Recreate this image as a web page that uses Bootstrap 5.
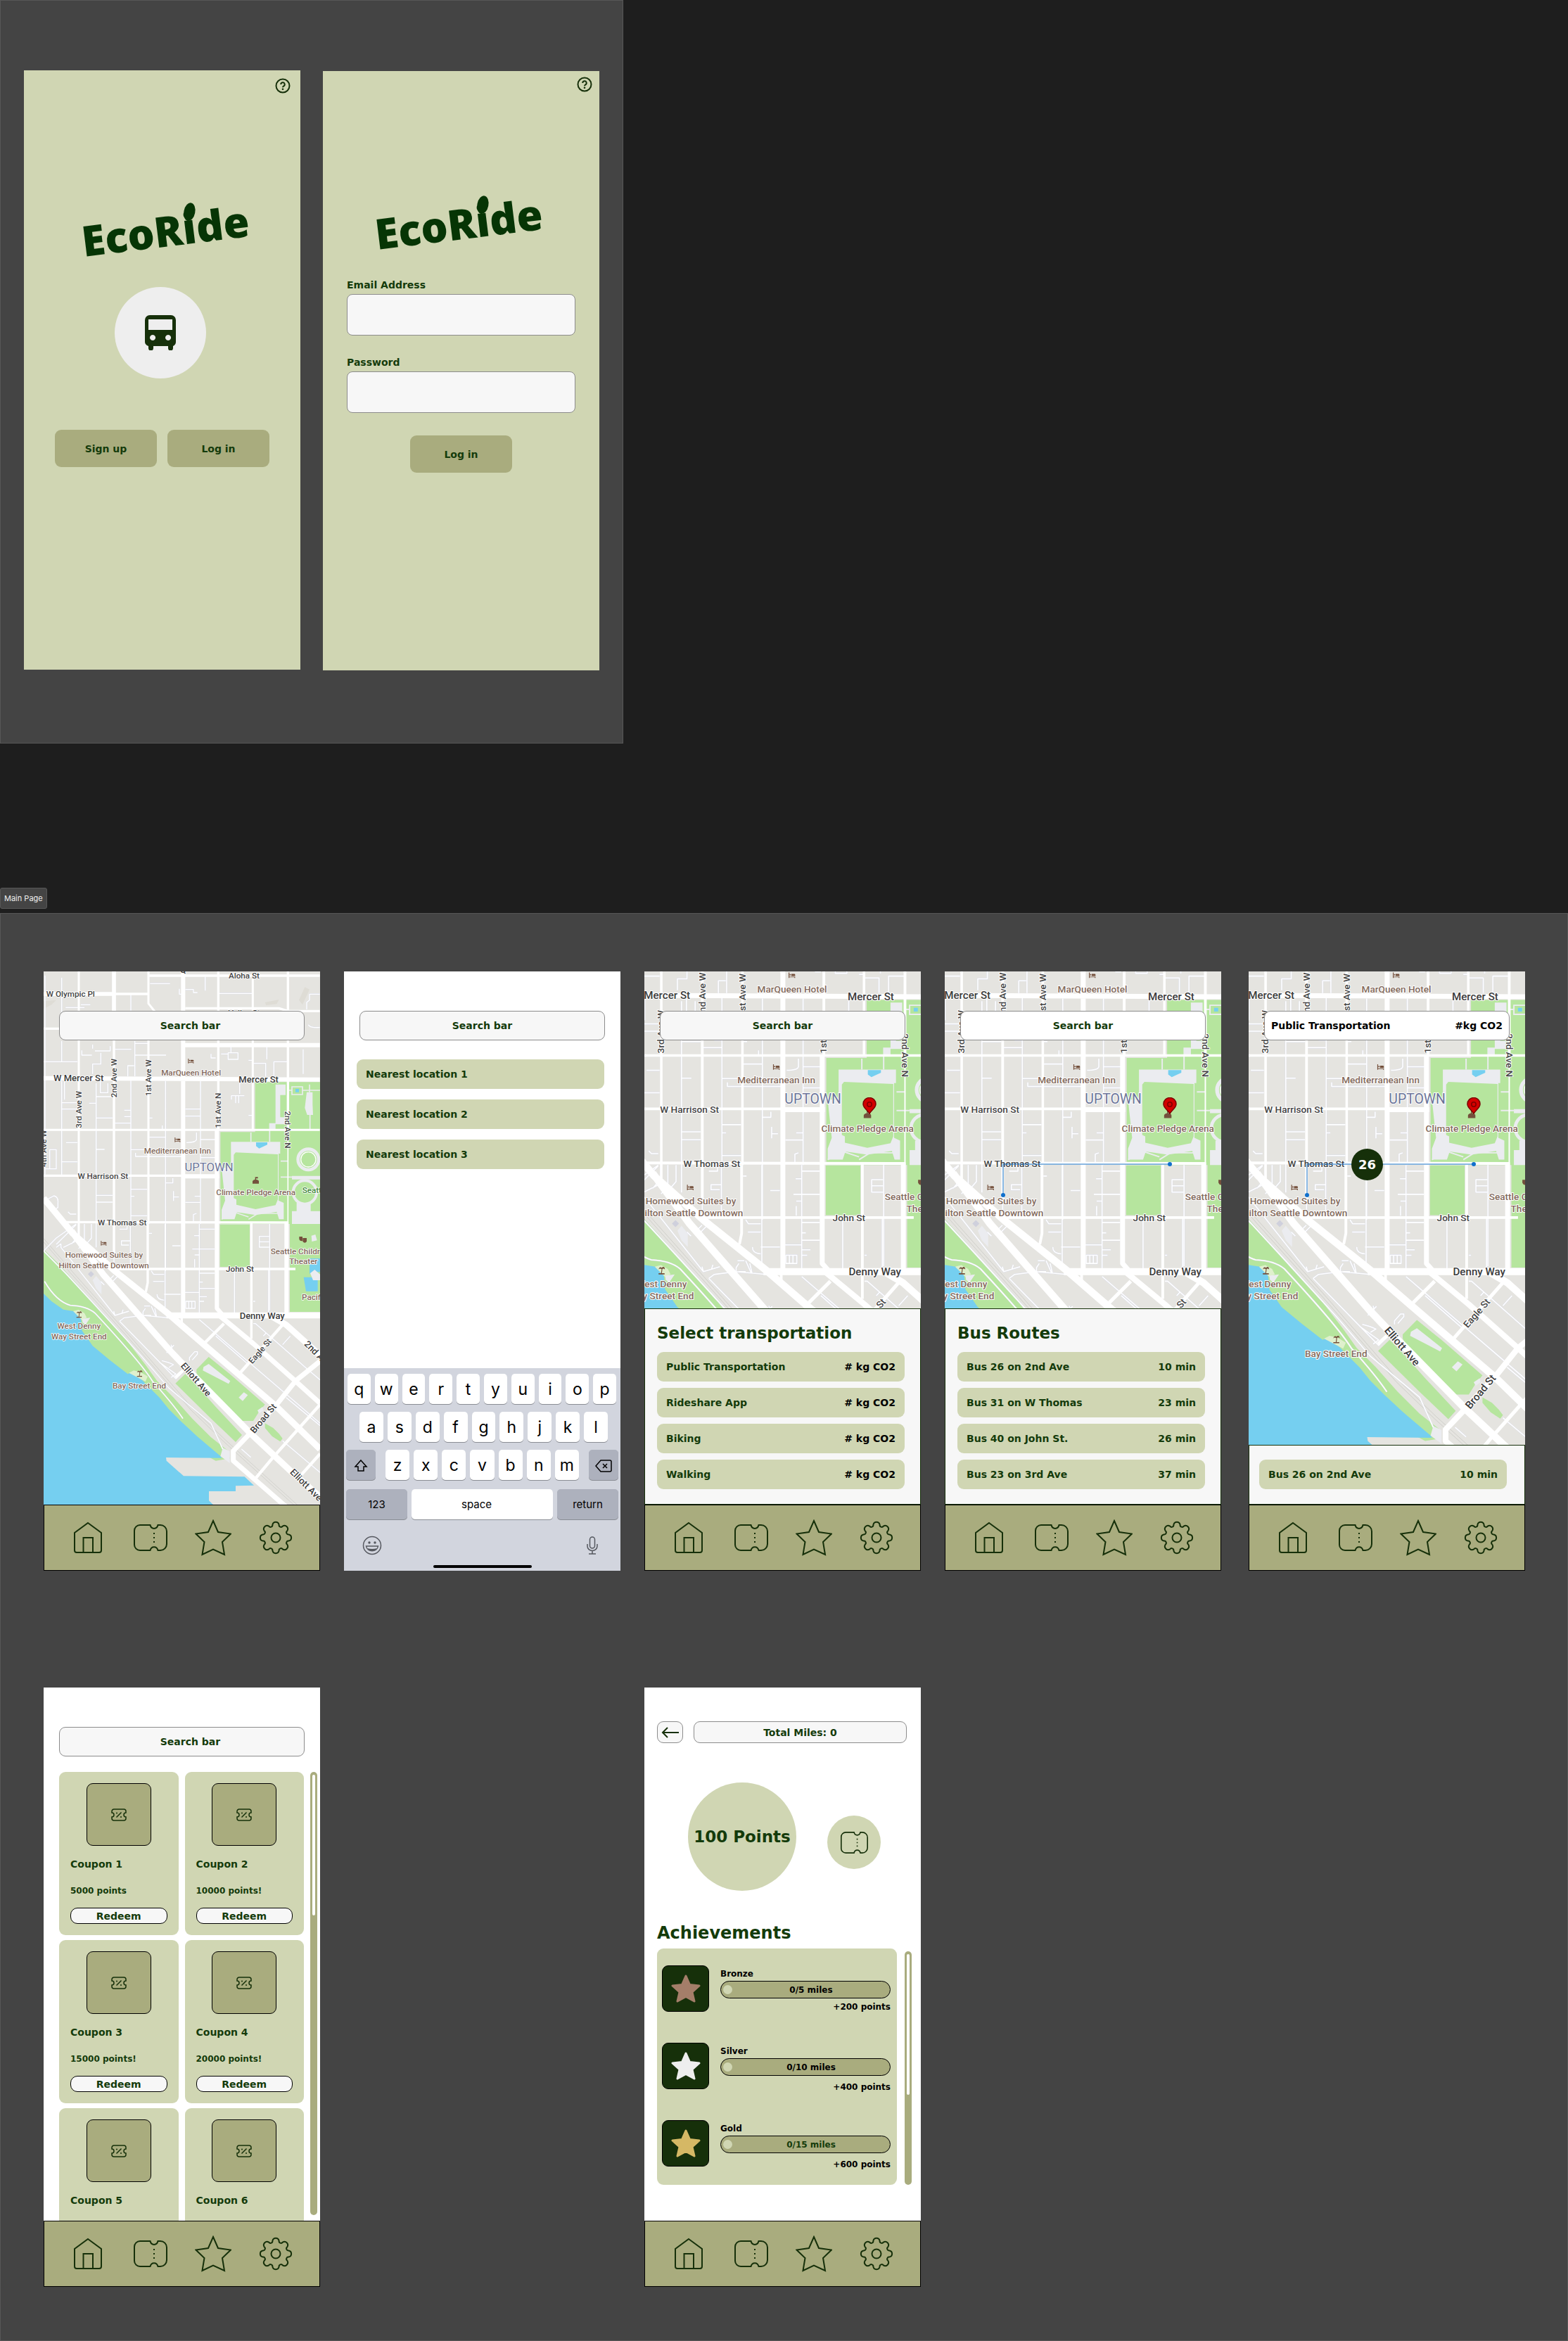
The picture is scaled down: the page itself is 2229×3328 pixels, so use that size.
<!DOCTYPE html>
<html lang="en">
<head>
<meta charset="utf-8">
<meta name="viewport" content="width=device-width, initial-scale=1">
<title>EcoRide</title>
<link href="https://cdn.jsdelivr.net/npm/bootstrap@5.3.0/dist/css/bootstrap.min.css" rel="stylesheet">
<style>
:root{--ink:#143b0b;--deep:#16300a;--olive:#a9ac7e;--sage:#d0d6b3;--paper:#f7f7f7;--board:#444}
body{background:#1e1e1e;font-family:"DejaVu Sans",sans-serif;font-weight:700;font-size:14px;line-height:20px;color:var(--ink)}
.board{background:var(--board);border:1px solid #575757}
.board-auth{width:fit-content;padding:99px 33px 103px;gap:32px;margin-bottom:205px}
.board-tab{display:inline-block;background:var(--board);border:1px solid #575757;border-radius:3px;color:#eee;font:400 11px/28px Inter,sans-serif;padding:0 5px;margin-bottom:6px}
.board-main{display:grid;grid-template-columns:repeat(5,393px);column-gap:34px;row-gap:166px;padding:82px 24px 76px 61px}
.screen{width:393px;height:852px;overflow:hidden;position:relative;display:flex;flex-direction:column;background:#fff}
.screen-auth{background:var(--sage)}
.third-col{grid-column:3}
.shifted{margin-left:5px}
.logo{display:block;width:260px;height:90px;overflow:visible}
.logo text{font:800 60px "Open Sans","Noto Sans",sans-serif;fill:#063505}
.help{position:absolute;right:14px;top:11px;line-height:0}
.help-tight{right:10px;top:8px}
.btn-eco,.btn-row,.btn-redeem{font:inherit;color:var(--ink);border:0}
.btn-eco{background:var(--olive);width:145px;height:53px;border-radius:9px}
.btn-row{background:var(--sage);height:42px;border-radius:9px;padding:0 13px;display:flex;justify-content:space-between;align-items:center;width:352px}
.busdisc{width:130px;height:130px;background:#eee;margin:29px 0 0 129px}
.field{height:59px;border:1px solid #8c8c8c;border-radius:8px;background:var(--paper)}
.field-label{margin-bottom:3px}
.searchbox{position:absolute;top:56px;left:22px;width:349px;height:42px;border:1px solid #8c8c8c;border-radius:9px;background:var(--paper);font:inherit;color:var(--ink);text-align:center;padding:0}
.searchbox::placeholder{color:var(--ink);opacity:1}
.searchbox.nudge{padding-left:24px}
.searchbox.plain{background:#fff}
.citymap{display:block;width:100%;flex:1 1 0;min-height:0}
.overlay{position:absolute;left:0;top:0}
.bus-pin{position:absolute;left:146px;top:252px;width:45px;height:45px;background:var(--deep);color:#fff;font-size:18px}
.sheet{background:var(--paper);border:1px solid var(--deep);padding:0 21px 21px 17px}
.sheet-title{font-size:23px;line-height:28px;font-weight:700;margin:20px 0 13px}
.tabbar{height:94px;flex:none;background:var(--olive);border:1px solid #000;display:grid;grid-template-columns:repeat(4,1fr);align-items:center;justify-items:center;padding:0 18px}
.tabbar a{line-height:0}
.line{fill:none;stroke:var(--deep);stroke-width:2}
.keys{background:#d2d5de;height:288px;padding:8px 0 4px;font-family:Inter,sans-serif;font-weight:400;color:#000}
.keyrow{display:flex;gap:6px;height:43px;margin-bottom:11px}
.key{flex:1 1 0;border:0;border-radius:5px;background:#fff;box-shadow:0 1px 0 #8a8d94;font:400 23px/40px Inter,sans-serif;color:#000;padding:0}
.key-mod{background:#adb1bd;flex:0 0 42px}
.key-word{font-size:15px}
.key-space{padding-right:16px}
.key-wide{flex:0 0 87px}
.homebar{width:140px;height:4px;border-radius:2px;background:#000}
.coupons{display:grid;grid-template-columns:1fr 1fr;gap:7px 9px;width:349px}
.coupon{height:232px;background:var(--sage);border-radius:9px;padding:16px 16px 0}
.coupon-thumb{width:92px;height:89px;border:1px solid #000;border-radius:9px;background:var(--olive);margin:0 auto 16px}
.fine{font-size:12px;line-height:16px}
.btn-redeem{height:23px;border:1px solid #000;border-radius:10px;background:var(--paper);line-height:20px;padding:0;width:100%}
.track{width:10px;border-radius:5px;background:var(--olive);padding:4px 3px}
.track-thumb{height:200px;border-radius:2px;background:#fff}
.pillbox{height:31px;border:1px solid #8c8c8c;border-radius:9px;background:var(--paper)}
.points{width:154px;height:154px;background:var(--sage);font-size:23px;white-space:nowrap}
.miniticket{width:76px;height:76px;background:var(--sage)}
.awards{width:341px;height:336px;background:var(--sage);border-radius:9px;padding:24px 9px 0 7px;color:#000}
.award{height:110px}
.medal{width:67px;height:66px;border-radius:9px;background:var(--deep);border:1px solid #000}
.meter{height:25px;border:1px solid #000;border-radius:13px;background:var(--olive);padding-left:3px;margin:2px 0 4px}
.meter-dot{width:13px;height:13px;border-radius:50%;background:var(--sage)}
.road-l{font:500 35px Roboto,sans-serif;fill:#444}
.road-b{font:500 39px Roboto,sans-serif;fill:#3c3c3c}
.poi{font:500 35px Roboto,sans-serif;fill:#836a5c}
.lbl text{paint-order:stroke;stroke:#fff;stroke-width:5;stroke-linejoin:round}
</style>
<script src="https://cdn.jsdelivr.net/npm/bootstrap@5.3.0/dist/js/bootstrap.bundle.min.js"></script>
</head>
<body>

<svg width="0" height="0" class="position-absolute" aria-hidden="true">
<defs>
<symbol id="i-home" viewBox="0 0 42 46"><path class="line" d="M21 2 40 16V41a3 3 0 0 1-3 3H5a3 3 0 0 1-3-3V16ZM14.500 44V23H28V44"/></symbol>
<symbol id="i-ticket" viewBox="0 0 48 38"><path class="line" d="M9 1H23.500C25 7.500 33 7.500 34.500 1H38a9 9 0 0 1 9 9V28a9 9 0 0 1-9 9H34.500C33 30.500 25 30.500 23.500 37H9a8 8 0 0 1-8-8V9a8 8 0 0 1 8-8Z"/><path class="line" stroke-dasharray="2 4" d="M29 12V28"/></symbol>
<symbol id="i-star" viewBox="0 0 52 52"><path class="line" d="M26 2 33 18 51 20.500 39 32 42 50 26 42.500 10.500 50 13.500 32 1.500 20.500 19 18Z"/></symbol>
<symbol id="i-gear" viewBox="-24 -24 48 48"><path class="line" d="M18.400-4.600A4.700 4.700 0 0 1 18.400 4.600A2.900 2.900 0 0 0 16.300 9.800A4.700 4.700 0 0 1 9.800 16.300A2.900 2.900 0 0 0 4.600 18.400A4.700 4.700 0 0 1-4.600 18.400A2.900 2.900 0 0 0-9.800 16.300A4.700 4.700 0 0 1-16.300 9.800A2.900 2.900 0 0 0-18.400 4.600A4.700 4.700 0 0 1-18.400-4.600A2.900 2.900 0 0 0-16.300-9.800A4.700 4.700 0 0 1-9.800-16.300A2.900 2.900 0 0 0-4.600-18.400A4.700 4.700 0 0 1 4.600-18.400A2.900 2.900 0 0 0 9.800-16.300A4.700 4.700 0 0 1 16.300-9.800A2.900 2.900 0 0 0 18.400-4.600Z"/><circle class="line" r="6.500"/></symbol>
<symbol id="i-help" viewBox="0 0 22 22"><circle class="line" cx="11" cy="11" r="9.500"/><path class="line" d="M8.300 9a2.700 2.700 0 1 1 4 2.300c-1 .6-1.300 1-1.300 2"/><circle cx="11" cy="15.800" r="1.300" fill="#16300a"/></symbol>
<symbol id="i-coupon" viewBox="0 0 22 18"><path class="line" style="stroke-width:1.500" d="M4 1H18a3 3 0 0 1 3 3V6a3 3 0 0 0 0 6v2a3 3 0 0 1-3 3H4a3 3 0 0 1-3-3V12a3 3 0 0 0 0-6V4a3 3 0 0 1 3-3ZM7.500 12.500 14.500 5.500"/><circle cx="8" cy="6.500" r="1" fill="#16300a"/><circle cx="14" cy="12" r="1" fill="#16300a"/></symbol>
<symbol id="i-medal" viewBox="0 0 42 40"><path fill="currentColor" stroke="currentColor" stroke-width="3" stroke-linejoin="round" d="M21 2 26.500 14.500 40 16 30 25 33 38 21 31.500 9 38 12 25 2 16 15.500 14.500Z"/></symbol>
<symbol id="i-pin" viewBox="0 0 20 24"><path d="M10 23C7 18 1 15 1 9.500a9 9 0 0 1 18 0C19 15 13 18 10 23Z" fill="#d40000" stroke="#7d0000" stroke-width="1.500"/><circle cx="10" cy="10" r="3.200" fill="none" stroke="#7d0000" stroke-width="1.500"/></symbol>
<g id="i-bed" fill="#74503c"><path d="M0 0H3V15H24V20H21V17H3V20H0ZM10 5H21a3 3 0 0 1 3 3V13H10Z"/><circle cx="6" cy="8" r="2.500"/></g>
<g id="i-palm" fill="#74503c"><path d="M0 24H22V28H0ZM9 24 11 9 14 9 12 24ZM11 9C4 5 1 8 0 12 2-2 10 2 12 5 14-2 24-1 23 10 20 6 16 6 13 9Z"/></g>

<g id="minor">
<path d="M192 440V1290M263 450V600M263 720V810M263 890V1290M410 900V1600M558 520V590M558 880V1500M706 890V1700M855 890V1500M1150 1500V1870M575 720V870M186 808H330M280 577H360M345 565H385M640 475H725M875 445V505M765 497V520H775M790 500H825V513H842M935 517H1075M1320 520H1364M1320 520V545L1308 555V585M1315 650Q1320 664 1364 662M490 755H560M575 780H708M575 730H632M545 870V825H572M900 775V792H920M943 775H975M973 770H1015V798H973ZM985 745V770M1060 802H1075M1080 815H1133V870M1138 745V798M1168 870V808H1230M1293 755V860M265 983H335M265 1010H330M275 890V970M380 985H408M428 890V940H460V900M410 957H480M410 1048H480M485 1070H558M530 1015H558M530 1042H558M637 1048H650M637 1130H706M692 1080V1100M790 1010H853M790 1040H853M855 1140H918M838 1110V1140Q835 1153 795 1153M282 1153H330M412 1182H446M265 1235H330M212 1265V1183H240V1265H190M560 1183H632M578 1197V1212H780M855 1217H920M987 970V953H1042M1005 953V985M1018 953V985M1060 1037H1078M1022 890V945M410 1378H480M410 1407H480M560 1352H628M560 1382H573M706 1325H737V1305M740 1360V1402M740 1385H763M830 1382H853M790 1408H853M560 1465H628M290 1448 300 1458H325M825 1490V1460L838 1455M510 1522H542V1500M192 1400 230 1380Q250 1385 247 1410V1430L230 1440"/>
<path d="M349 760V780H392M395 735V752M470 742V762H405M395 860V818H430V770"/>
</g>
<g id="minor2">
<path d="M214 0V50L185 85M240 0V70Q238 85 215 105M270 0V60L240 95M398 90V72H435M398 75V90H430M436 0V190M366 0V170M515 40H528M584 0V380M730 0V380M708 50H730M700 107H796M730 22H796M615 93H650M710 132H730M710 150V185M880 192V380M1025 192V380M1028 53H986V99H1028M986 76H1028M986 53V99M525 200 535 215H580M533 245H580M580 300H650M550 300Q548 322 580 325M730 210H796M730 275H796M732 248H745M732 310H762M732 330H750M668 292H730M672 330H712V360H672ZM685 330V360M698 330V360M960 330H968M495 350H520M490 395V375L500 360M500 390H525M540 360 548 395M525 350 545 395M730 408 1000 640 1245 850M800 478 940 600M960 425H970L1180 610 1245 665M1118 478 1085 515M1015 465 1003 478M1100 740 1245 860M1085 925 1245 1060M910 960 950 995M688 583V570L710 545H722V555L700 580M560 590 630 640 610 655M570 583Q600 590 620 600L600 612M390 415 410 400 490 390 600 400M390 415 630 660 660 630M120 100 140 85V100L370 390 430 372M370 390 365 372M400 380 405 365M120 87 205 3M66 115 120 60 205 0M150 100 210 70M310 245 325 260M360 245 380 225M345 240 365 220M590 550 622 517M615 540 610 515"/>
<path d="M66 115 160 210 280 340 480 560 600 700 780 850 830 960M70 245Q120 330 180 347 250 350 285 380 480 590 530 670 620 770 660 830 820 960M157 225Q155 290 190 312L225 305M195 312 190 345M285 380Q310 400 303 430L290 460M303 430 250 425 240 450 260 490 330 545 400 590 470 600 510 650M240 360 255 400M575 740 605 770M520 650 540 670M700 660 790 830 808 930M785 825 800 828 810 850 828 850 838 870 858 870 870 890 890 895M865 890H887V908H865ZM745 625 800 660 1000 790M780 680 900 790 910 840M740 640 735 660M800 660 860 720 985 815M875 765 910 800 905 840 965 838M910 800 960 815 967 838M790 1005 860 1003M900 1147Q890 1125 920 1125L975 1120M775 1148H1000M1110 195H1143M1140 170V225M1120 257Q1133 257 1133 285V345M1125 322H1182V348H1125ZM880 5V95M838 95V150M815 120H838M815 150H865V72M875 160V130L885 115"/>
</g>
<g id="roads">
<path d="M336 423V1570M633 423V560L665 600M633 700V1500M1078 455V890M1078 745V1100M186 1099H1364" stroke-width="9"/>
<path d="M486 600V1640M186 519H630M633 441H1364M790 580H1190L1228 592H1364M186 667H260M931 423V1100M1228 423V1100M270 1492 1230 1494M186 1294H780M630 1500V1750L622 1790" stroke-width="10"/>
<path d="M486 423V600M186 519H490" stroke-width="17"/>
<path d="M1228 890V1490M935 1099H1078" stroke-width="5"/>
<path d="M781 423V1890M186 878 1364 884M781 737H1364M781 1297H935M925 1100V1860L960 1900M1222 1490V1890" stroke-width="18"/>
<path d="M1072 1494V1990M500 1692H1260M775 1890V1925" stroke-width="10"/>
</g>
<g id="roads2">
<path d="M66-110 190 40 375 205 600 385 750 515 1060 780 1245 960M185 30 320 215 600 535 700 640 950 895 1110 1045 1245 1165" stroke-width="27"/>
<path d="M590 390H1245M1040 395 1100 430 1245 560" stroke-width="26"/>
<path d="M815 390 960 510 1140 670 1245 765M1245 585 1140 670 1060 770 940 900 875 968V1010L1110 1215" stroke-width="21"/>
<path d="M1085 430 898 642M835 425 745 515M1245 770 1045 995 970 1085M1245 980 1165 1070M628 655 660 625" stroke-width="13"/>
</g>
<g id="city">
<path fill="#e5e4e0" d="M186 423H1365V2700H186Z"/>
<path fill="#dedcd5" d="M186 550 240 545 220 565 186 582ZM1130 555 1190 543 1180 562 1135 567ZM1300 490 1320 500 1290 565 1275 545Z"/>
<path fill="#b6e59e" d="M1088 895H1365V1500H940V1108H1088ZM938 1502H1065V1683H938ZM1236 1490H1365V1875H1236ZM1240 1300H1365V1500H1240Z"/>
<g transform="translate(120 1500)">
<path fill="#b6e59e" d="M66 108 130 170 220 270 290 350 400 470 500 600 550 670 620 740 700 830 780 910 850 965 860 1000 800 1010 600 900 300 700 66 330Z"/>
<path fill="#75cff0" d="M66 297 100 330 150 365 195 372 225 400 230 455 275 520 350 582 425 640 450 628 500 680 560 740 600 790 650 840 720 905 820 990 825 998 588 996 590 1010 663 1075 923 1078 963 1115 885 1117V1140H771V1180L792 1200H66Z"/>
<path fill="#dff0cd" d="M192 372 215 366 240 380 250 400 230 410ZM430 635 450 625 480 632 510 650 500 672Z"/>
<path fill="#b6e59e" d="M628 680 670 640 720 690 800 780 912 900 885 930 780 830ZM718 620 770 567 860 640 1010 770 985 800 960 840 910 840 820 760 740 680 718 635ZM1010 850 1045 870 1070 895 1085 915 1075 928 1040 905 1010 870Z"/>
<path fill="#ebecf0" d="M748 610 770 597 862 670 855 682 745 625ZM898 740 920 718 937 730 915 755ZM978 795 1000 780 1003 795 985 808ZM230 405 265 400 245 430 232 420ZM830 955 860 970V1020L820 990ZM275 240 290 222 313 250V300L290 275Z"/>
<path fill="#cfd0dc" d="M255 214 268 201 281 214 268 227Z"/>
<path fill="#75cff0" d="M1200 147H1245V205H1225L1200 212ZM1175 227H1235V287H1185Z"/>
<path fill="#ebecf0" d="M1203 210 1222 195 1245 215V240H1215ZM1208 50 1225 45 1232 70 1210 75Z"/>
<path fill="none" stroke="#c9c8c4" stroke-width="2" d="M66 62 190 205 440 485 700 785 840 920 1150 1200M60 70 184 213 434 493 694 793 834 928 1144 1208"/>
</g>
<path fill="#ebecf0" d="M985 1150H1195V1200H1188V1400L1210 1410V1480H1190L1180 1448 1090 1462 1010 1450 1000 1480H945V1440L960 1400 945 1260H985ZM1175 905H1218V950H1195V1045H1215V1075H1175ZM1148 1070H1175V1100H1148ZM1308 938H1333V990L1335 1035H1310L1300 1005ZM1245 1445H1365V1500H1245ZM1245 1295H1365V1310H1245ZM1265 1410H1325V1450H1265Z"/>
<path fill="#b6e59e" d="M1005 1195 1185 1203V1395L1175 1420 1090 1437 1008 1418V1395L997 1390V1205Z"/>
<path fill="#75cff0" d="M1092 1152H1140V1162L1105 1178 1092 1168ZM1260 924H1275V938H1260Z"/>
<g fill="none" stroke="#ebecf0"><circle cx="1315" cy="1225" r="44" stroke-width="14"/><circle cx="1300" cy="1365" r="50" stroke-width="12"/><path stroke-width="5" d="M1245 915H1290V948H1245ZM1230 930H1245M1290 930H1365M1320 905V938M1322 1035V1095M1197 1232H1228M1197 1300H1245M945 1480 1000 1450 1060 1470M1060 1480 1100 1455 1200 1455M1070 1110V1150M1150 1100V1150"/></g>
<circle cx="1315" cy="1225" r="32" fill="none" stroke="#fff" stroke-width="4"/>
<g fill="none" stroke-linejoin="round">
<g stroke="#d9dcea" stroke-width="6"><use href="#minor"/><g transform="translate(120 1500)"><use href="#minor2"/></g></g>
<g stroke="#fff" stroke-width="4"><use href="#minor"/><g transform="translate(120 1500)"><use href="#minor2"/></g></g>
<g stroke="#fff"><use href="#roads"/><g transform="translate(120 1500)"><use href="#roads2"/></g></g>
</g>
<use href="#i-bed" x="802" y="795"/><use href="#i-bed" x="745" y="1131"/><use href="#i-bed" x="430" y="1572"/>
<use href="#i-palm" x="326" y="1872"/><use href="#i-palm" x="584" y="2124"/>
<path fill="#74503c" d="M1088 1300H1100V1306H1092V1310Q1104 1312 1104 1318V1328H1077V1318Q1078 1312 1088 1310ZM1276 1554H1290V1572Q1280 1575 1276 1565ZM1291 1560H1308V1575Q1300 1585 1291 1575Z"/>
</g>
</defs>
</svg>

<!-- Sign-in screens -->
<section class="board board-auth d-flex">
  <main class="screen screen-auth">
    <a href="#" class="help" aria-label="Help"><svg width="22" height="22"><use href="#i-help"/></svg></a>
    <svg class="logo mx-auto" style="margin-top:189px" role="img" aria-label="EcoRide" viewBox="0 0 260 90"><g transform="translate(18 76) rotate(-7)"><text>EcoRide</text><ellipse transform="translate(157 -45) rotate(18)" rx="8" ry="13" fill="#063505"/></g></svg>
    <div class="busdisc rounded-circle d-flex align-items-center justify-content-center">
      <svg width="44" height="50" viewBox="0 0 44 50"><path fill="#16300a" fill-rule="evenodd" d="M7 0H37a7 7 0 0 1 7 7V38q0 4-4 6V47a3.500 3.500 0 0 1-7 0V44H12V47a3.500 3.500 0 0 1-7 0V44Q0 42 0 38V7A7 7 0 0 1 7 0ZM5 6V21H39V6ZM11 28a4 4 0 1 0 .1 0ZM33 28a4 4 0 1 0 .1 0Z"/></svg>
    </div>
    <div class="d-flex justify-content-center" style="gap:15px;margin-top:73px">
      <button class="btn btn-eco" type="button">Sign up</button>
      <button class="btn btn-eco" type="button">Log in</button>
    </div>
  </main>
  <form class="screen screen-auth" style="margin-top:1px">
    <a href="#" class="help help-tight" aria-label="Help"><svg width="22" height="22"><use href="#i-help"/></svg></a>
    <svg class="logo mx-auto" style="margin-top:178px" role="img" aria-label="EcoRide" viewBox="0 0 260 90"><g transform="translate(10 76) rotate(-7)"><text>EcoRide</text><ellipse transform="translate(157 -45) rotate(18)" rx="8" ry="13" fill="#063505"/></g></svg>
    <div class="d-flex flex-column" style="padding:26px 34px 0">
      <div class="mb-4 pb-1">
        <label class="field-label" for="email">Email Address</label>
        <input class="form-control field" type="email" id="email">
      </div>
      <div class="mb-4 pb-2">
        <label class="field-label" for="pass">Password</label>
        <input class="form-control field" type="password" id="pass">
      </div>
      <button class="btn btn-eco mx-auto" type="button">Log in</button>
    </div>
  </form>
</section>

<div class="board-tab d-block" style="width:fit-content">Main Page</div>

<section class="board board-main">

  <article class="screen">
    <svg class="citymap" viewBox="186 423 1179 2274" preserveAspectRatio="xMinYMin slice">
      <use href="#city"/>
      <g class="lbl" id="labels">
        <g class="road-l" text-anchor="middle">
          <text x="1041" y="454">Aloha St</text><text x="301" y="531">W Olympic Pl</text><text x="1041" y="612">Valley St</text>
          <text x="439" y="1309">W Harrison St</text><text x="521" y="1506">W Thomas St</text><text x="1023" y="1705">John St</text>
          <text transform="translate(497 878) rotate(-90)">2nd Ave W</text>
          <text transform="translate(645 877) rotate(-90)">1st Ave W</text>
          <text transform="translate(347 1012) rotate(-90)">3rd Ave W</text>
          <text transform="translate(198 1178) rotate(-90)">4th Ave W</text>
          <text transform="translate(942 1016) rotate(-90)">1st Ave N</text>
          <text transform="translate(1216 1098) rotate(90)">2nd Ave N</text>
          <text transform="translate(1118 2050) rotate(-49)">Eagle St</text>
        </g>
        <g class="road-b" text-anchor="middle">
          <text x="335" y="892">W Mercer St</text><text x="1103" y="897">Mercer St</text><text x="1118" y="1904">Denny Way</text>
          <text transform="translate(1133 2338) rotate(-50)">Broad St</text>
          <text transform="translate(826 2172) rotate(49)">Elliott Ave</text>
          <text transform="translate(1296 2622) rotate(45)">Elliott Ave</text>
          <text transform="translate(1345 2064) rotate(45)">2nd Ave</text>
          <text x="781" y="428">Q</text>
        </g>
        <g class="poi" text-anchor="middle">
          <text x="815" y="867">MarQueen Hotel</text><text x="757" y="1201">Mediterranean Inn</text><text x="1091" y="1377">Climate Pledge Arena</text>
          <text x="444" y="1644">Homewood Suites by</text><text x="443" y="1688">Hilton Seattle Downtown</text>
          <text x="337" y="1948">West Denny</text><text x="337" y="1991">Way Street End</text><text x="594" y="2201">Bay Street End</text>
          <text x="1294" y="1672">Theater</text>
        </g>
        <g class="poi"><text x="1154" y="1629">Seattle Childr</text><text x="1287" y="1824">Pacific</text><text x="1289" y="1368" style="fill:#448a3c">Seattle</text></g>
        <text x="891" y="1274" text-anchor="middle" style="font:400 50px Roboto,sans-serif;fill:#6b7499">UPTOWN</text>
      </g>
    </svg>
    <input class="searchbox nudge" type="text" placeholder="Search bar" aria-label="Search">
    <nav class="tabbar"><a href="#" aria-label="Home"><svg width="42" height="46"><use href="#i-home"/></svg></a><a href="#" aria-label="Coupons"><svg width="48" height="38"><use href="#i-ticket"/></svg></a><a href="#" aria-label="Achievements"><svg width="52" height="52"><use href="#i-star"/></svg></a><a href="#" aria-label="Settings"><svg width="48" height="48"><use href="#i-gear"/></svg></a></nav>
  </article>

  <article class="screen">
    <input class="searchbox" type="text" placeholder="Search bar" aria-label="Search">
    <div class="d-flex flex-column" style="gap:15px;padding:125px 0 0 18px">
      <button class="btn btn-row" type="button">Nearest location 1</button>
      <button class="btn btn-row" type="button">Nearest location 2</button>
      <button class="btn btn-row" type="button">Nearest location 3</button>
    </div>
    <div class="keys mt-auto d-flex flex-column">
      <div class="keyrow" style="padding:0 6px 0 5px"><button class="key">q</button><button class="key">w</button><button class="key">e</button><button class="key">r</button><button class="key">t</button><button class="key">y</button><button class="key">u</button><button class="key">i</button><button class="key">o</button><button class="key">p</button></div>
      <div class="keyrow" style="padding:0 18px 0 22px"><button class="key">a</button><button class="key">s</button><button class="key">d</button><button class="key">f</button><button class="key">g</button><button class="key">h</button><button class="key">j</button><button class="key">k</button><button class="key">l</button></div>
      <div class="keyrow" style="padding:0 3px">
        <button class="key key-mod me-2" aria-label="Shift"><svg width="20" height="20" viewBox="0 0 20 20"><path d="M10 2 18 11H14V17H6V11H2Z" fill="none" stroke="#000" stroke-width="1.500"/></svg></button>
        <button class="key">z</button><button class="key">x</button><button class="key">c</button><button class="key">v</button><button class="key">b</button><button class="key">n</button><button class="key">m</button>
        <button class="key key-mod ms-2" aria-label="Delete"><svg width="24" height="20" viewBox="0 0 24 20"><path d="M8 2H21a2 2 0 0 1 2 2V16a2 2 0 0 1-2 2H8L1 10ZM11 7 17 13M17 7 11 13" fill="none" stroke="#000" stroke-width="1.500"/></svg></button>
      </div>
      <div class="keyrow" style="padding:2px 3px 0;height:45px"><button class="key key-mod key-word key-wide">123</button><button class="key key-word key-space">space</button><button class="key key-mod key-word key-wide">return</button></div>
      <div class="d-flex justify-content-between" style="padding:12px 31px 0 26px">
        <svg width="28" height="28" viewBox="0 0 28 28"><circle cx="14" cy="14" r="12.500" fill="none" stroke="#55585f" stroke-width="1.500"/><circle cx="10" cy="10" r="1.700" fill="#55585f"/><circle cx="18" cy="10" r="1.700" fill="#55585f"/><path d="M5.500 15H22.500C21 24 7 24 5.500 15Z" fill="none" stroke="#55585f" stroke-width="1.500"/><path d="M7 18Q14 20 21 18 18 22 14 22 10 22 7 18Z" fill="#55585f"/></svg>
        <svg width="18" height="28" viewBox="0 0 18 28"><g fill="none" stroke="#55585f" stroke-width="1.500"><rect x="5.500" y="2" width="7" height="16" rx="3.500"/><path d="M2 12V15a7 6.500 0 0 0 14 0V12M9 22V26M4 26H14"/></g></svg>
      </div>
      <div class="homebar mx-auto mt-auto"></div>
    </div>
  </article>

  <article class="screen">
    <svg class="citymap" data-map viewBox="274 791 1012 1236" preserveAspectRatio="xMinYMin slice"><use href="#city"/></svg>
    <svg class="overlay" width="393" height="480"><use href="#i-pin" x="310" y="179" width="20" height="24"/></svg>
    <input class="searchbox" type="text" placeholder="Search bar" aria-label="Search">
    <div class="sheet">
      <h2 class="sheet-title">Select transportation</h2>
      <div class="d-flex flex-column" style="gap:9px">
        <button class="btn btn-row" type="button">Public Transportation<span class="text-black"># kg CO2</span></button>
        <button class="btn btn-row" type="button">Rideshare App<span class="text-black"># kg CO2</span></button>
        <button class="btn btn-row" type="button">Biking<span class="text-black"># kg CO2</span></button>
        <button class="btn btn-row" type="button">Walking<span class="text-black"># kg CO2</span></button>
      </div>
    </div>
    <nav class="tabbar"><a href="#" aria-label="Home"><svg width="42" height="46"><use href="#i-home"/></svg></a><a href="#" aria-label="Coupons"><svg width="48" height="38"><use href="#i-ticket"/></svg></a><a href="#" aria-label="Achievements"><svg width="52" height="52"><use href="#i-star"/></svg></a><a href="#" aria-label="Settings"><svg width="48" height="48"><use href="#i-gear"/></svg></a></nav>
  </article>

  <article class="screen">
    <svg class="citymap" data-map viewBox="274 791 1012 1236" preserveAspectRatio="xMinYMin slice"><use href="#city"/></svg>
    <svg class="overlay" width="393" height="480"><path d="M83 318V274H320" fill="none" stroke="#1773c8" stroke-width="1"/><circle cx="83" cy="318" r="3" fill="#1170cc"/><circle cx="320" cy="274" r="3" fill="#1170cc"/><use href="#i-pin" x="310" y="179" width="20" height="24"/></svg>
    <input class="searchbox plain" type="text" placeholder="Search bar" aria-label="Search">
    <div class="sheet">
      <h2 class="sheet-title">Bus Routes</h2>
      <div class="d-flex flex-column" style="gap:9px">
        <button class="btn btn-row" type="button">Bus 26 on 2nd Ave<span>10 min</span></button>
        <button class="btn btn-row" type="button">Bus 31 on W Thomas<span>23 min</span></button>
        <button class="btn btn-row" type="button">Bus 40 on John St.<span>26 min</span></button>
        <button class="btn btn-row" type="button">Bus 23 on 3rd Ave<span>37 min</span></button>
      </div>
    </div>
    <nav class="tabbar"><a href="#" aria-label="Home"><svg width="42" height="46"><use href="#i-home"/></svg></a><a href="#" aria-label="Coupons"><svg width="48" height="38"><use href="#i-ticket"/></svg></a><a href="#" aria-label="Achievements"><svg width="52" height="52"><use href="#i-star"/></svg></a><a href="#" aria-label="Settings"><svg width="48" height="48"><use href="#i-gear"/></svg></a></nav>
  </article>

  <article class="screen shifted">
    <svg class="citymap" data-map viewBox="274 791 1012 1735" preserveAspectRatio="xMinYMin slice"><use href="#city"/></svg>
    <svg class="overlay" width="393" height="480"><path d="M83 318V274H320" fill="none" stroke="#1773c8" stroke-width="1"/><circle cx="83" cy="318" r="3" fill="#1170cc"/><circle cx="320" cy="274" r="3" fill="#1170cc"/><use href="#i-pin" x="310" y="179" width="20" height="24"/></svg>
    <div class="searchbox plain text-black d-flex justify-content-between align-items-center" style="padding:0 9px"><span>Public Transportation</span><span>#kg CO2</span></div>
    <div class="bus-pin rounded-circle d-flex align-items-center justify-content-center">26</div>
    <div class="sheet" style="padding:20px 21px 21px 14px">
      <button class="btn btn-row" type="button">Bus 26 on 2nd Ave<span>10 min</span></button>
    </div>
    <nav class="tabbar"><a href="#" aria-label="Home"><svg width="42" height="46"><use href="#i-home"/></svg></a><a href="#" aria-label="Coupons"><svg width="48" height="38"><use href="#i-ticket"/></svg></a><a href="#" aria-label="Achievements"><svg width="52" height="52"><use href="#i-star"/></svg></a><a href="#" aria-label="Settings"><svg width="48" height="48"><use href="#i-gear"/></svg></a></nav>
  </article>

  <article class="screen">
    <input class="searchbox nudge" type="text" placeholder="Search bar" aria-label="Search">
    <div class="d-flex flex-fill overflow-hidden" style="gap:9px;padding:120px 4px 0 22px">
      <div class="coupons">
        <div class="coupon"><div class="coupon-thumb d-flex align-items-center justify-content-center"><svg width="22" height="18"><use href="#i-coupon"/></svg></div><div class="mb-3">Coupon 1</div><div class="fine pt-1 mt-1 mb-3">5000 points</div><button class="btn-redeem" type="button">Redeem</button></div>
        <div class="coupon"><div class="coupon-thumb d-flex align-items-center justify-content-center"><svg width="22" height="18"><use href="#i-coupon"/></svg></div><div class="mb-3">Coupon 2</div><div class="fine pt-1 mt-1 mb-3">10000 points!</div><button class="btn-redeem" type="button">Redeem</button></div>
        <div class="coupon"><div class="coupon-thumb d-flex align-items-center justify-content-center"><svg width="22" height="18"><use href="#i-coupon"/></svg></div><div class="mb-3">Coupon 3</div><div class="fine pt-1 mt-1 mb-3">15000 points!</div><button class="btn-redeem" type="button">Redeem</button></div>
        <div class="coupon"><div class="coupon-thumb d-flex align-items-center justify-content-center"><svg width="22" height="18"><use href="#i-coupon"/></svg></div><div class="mb-3">Coupon 4</div><div class="fine pt-1 mt-1 mb-3">20000 points!</div><button class="btn-redeem" type="button">Redeem</button></div>
        <div class="coupon"><div class="coupon-thumb d-flex align-items-center justify-content-center"><svg width="22" height="18"><use href="#i-coupon"/></svg></div><div>Coupon 5</div></div>
        <div class="coupon"><div class="coupon-thumb d-flex align-items-center justify-content-center"><svg width="22" height="18"><use href="#i-coupon"/></svg></div><div>Coupon 6</div></div>
      </div>
      <div class="track mb-2"><div class="track-thumb"></div></div>
    </div>
    <nav class="tabbar"><a href="#" aria-label="Home"><svg width="42" height="46"><use href="#i-home"/></svg></a><a href="#" aria-label="Coupons"><svg width="48" height="38"><use href="#i-ticket"/></svg></a><a href="#" aria-label="Achievements"><svg width="52" height="52"><use href="#i-star"/></svg></a><a href="#" aria-label="Settings"><svg width="48" height="48"><use href="#i-gear"/></svg></a></nav>
  </article>

  <article class="screen third-col">
    <div class="d-flex" style="gap:15px;padding:48px 20px 0 18px">
      <button class="pillbox p-0" style="width:37px" type="button" aria-label="Back"><svg width="26" height="16" viewBox="0 0 26 16" class="d-block mx-auto"><path class="line" d="M9 1 2 8 9 15M2 8H25"/></svg></button>
      <div class="pillbox flex-fill d-flex align-items-center justify-content-center">Total Miles: 0</div>
    </div>
    <div class="d-flex align-items-center" style="gap:44px;padding:56px 0 0 62px">
      <div class="points rounded-circle d-flex align-items-center justify-content-center">100 Points</div>
      <div class="miniticket rounded-circle d-flex align-items-center justify-content-center mt-3"><svg width="39" height="31"><use href="#i-ticket"/></svg></div>
    </div>
    <h2 style="font-size:24px;line-height:28px;font-weight:700;margin:46px 0 8px 18px">Achievements</h2>
    <div class="d-flex" style="gap:11px;margin-left:18px">
      <div class="awards">
        <div class="award d-flex gap-3"><div class="medal d-flex align-items-center justify-content-center" style="color:#a47e69"><svg width="42" height="40"><use href="#i-medal"/></svg></div>
          <div class="flex-fill"><div class="fine pt-1">Bronze</div><div class="meter d-flex align-items-center"><span class="meter-dot"></span><span class="fine mx-auto">0/5 miles</span></div><div class="fine text-end">+200 points</div></div></div>
        <div class="award d-flex gap-3"><div class="medal d-flex align-items-center justify-content-center" style="color:#eee"><svg width="42" height="40"><use href="#i-medal"/></svg></div>
          <div class="flex-fill"><div class="fine pt-1">Silver</div><div class="meter d-flex align-items-center"><span class="meter-dot"></span><span class="fine mx-auto">0/10 miles</span></div><div class="fine text-end pt-1">+400 points</div></div></div>
        <div class="award d-flex gap-3"><div class="medal d-flex align-items-center justify-content-center" style="color:#d5b865"><svg width="42" height="40"><use href="#i-medal"/></svg></div>
          <div class="flex-fill"><div class="fine pt-1">Gold</div><div class="meter d-flex align-items-center"><span class="meter-dot"></span><span class="fine mx-auto" style="color:#143b0b">0/15 miles</span></div><div class="fine text-end pt-1">+600 points</div></div></div>
      </div>
      <div class="track mt-1"><div class="track-thumb"></div></div>
    </div>
    <nav class="tabbar mt-auto"><a href="#" aria-label="Home"><svg width="42" height="46"><use href="#i-home"/></svg></a><a href="#" aria-label="Coupons"><svg width="48" height="38"><use href="#i-ticket"/></svg></a><a href="#" aria-label="Achievements"><svg width="52" height="52"><use href="#i-star"/></svg></a><a href="#" aria-label="Settings"><svg width="48" height="48"><use href="#i-gear"/></svg></a></nav>
  </article>
</section>

<script>
// The zoomed maps carry the same street and place names as the first one,
// less those that fall outside their view.
const labels = document.getElementById('labels');
document.querySelectorAll('[data-map]').forEach(map => {
  const copy = labels.cloneNode(true);
  copy.removeAttribute('id');
  map.appendChild(copy);
  const view = map.getBoundingClientRect();
  copy.querySelectorAll('text').forEach(t => {
    const b = t.getBoundingClientRect();
    if (b.right < view.left + 4 || b.left > view.right - 4 || b.bottom < view.top + 4 || b.top > view.bottom - 4) t.remove();
  });
});
</script>
</body>
</html>
